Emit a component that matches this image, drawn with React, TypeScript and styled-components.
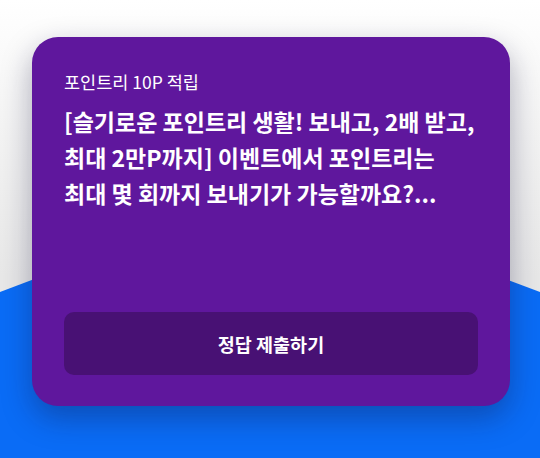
import React from "react";
import styled, { createGlobalStyle } from "styled-components";

const Global = createGlobalStyle`
  html, body { margin: 0; padding: 0; }
  body { font-family: "Noto Sans CJK KR", "Noto Sans", sans-serif; }
`;

const Page = styled.div`
  position: relative;
  width: 540px;
  height: 458px;
  overflow: hidden;
  background: linear-gradient(180deg, #ffffff 0%, #f3f3f3 30%, #e8e8e8 60%);
  padding: 37px 30px 0 32px;
  box-sizing: border-box;

  &::before {
    content: "";
    position: absolute;
    inset: 0;
    background: #0a6cf6;
    clip-path: polygon(0 292px, 270px 190px, 540px 292px, 540px 458px, 0 458px);
  }
`;

const Card = styled.section`
  position: relative;
  z-index: 1;
  height: 369px;
  box-sizing: border-box;
  background: #5f179d;
  border-radius: 26px;
  padding: 32px 32px 31px 32px;
  display: flex;
  flex-direction: column;
  box-shadow: 0 12px 30px rgba(20, 20, 60, 0.35);
  color: #ffffff;
`;

const Label = styled.div`
  font-size: 17.5px;
  line-height: 26px;
  font-weight: 400;
`;

const Title = styled.h2`
  margin: 8px 0 0;
  font-size: 23px;
  line-height: 36px;
  font-weight: 700;
  letter-spacing: 0;
`;

const SubmitButton = styled.button`
  margin-top: auto;
  height: 63px;
  border: none;
  border-radius: 10px;
  background: #481174;
  color: #ffffff;
  font-family: inherit;
  font-size: 18.5px;
  font-weight: 700;
  cursor: pointer;
`;

export default function App() {
  return (
    <>
      <Global />
      <Page>
        <Card>
          <Label>포인트리 10P 적립</Label>
          <Title>
            [슬기로운 포인트리 생활! 보내고, 2배 받고,
            <br />
            최대 2만P까지] 이벤트에서 포인트리는
            <br />
            최대 몇 회까지 보내기가 가능할까요?...
          </Title>
          <SubmitButton>정답 제출하기</SubmitButton>
        </Card>
      </Page>
    </>
  );
}
